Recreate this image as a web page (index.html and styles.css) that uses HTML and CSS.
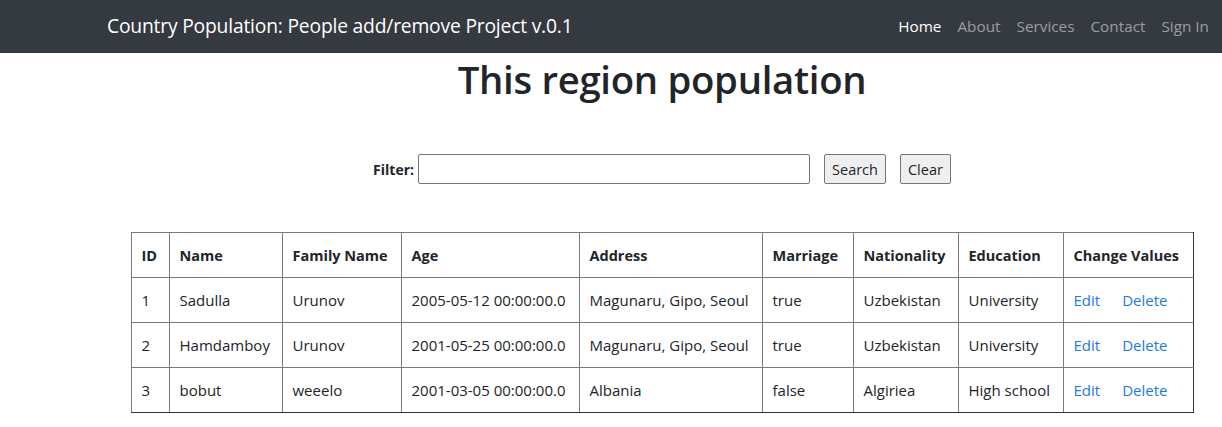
FILE: index.html
```html
<!DOCTYPE html>
<html>
<head>
<meta charset="utf-8">
<link rel="stylesheet" href="styles.css">
</head>
<body>
<nav class="navbar">
  <a class="brand" href="#">Country Population: People add/remove Project v.0.1</a>
  <ul class="nav">
    <li><a class="active" href="#">Home</a></li>
    <li><a href="#">About</a></li>
    <li><a href="#">Services</a></li>
    <li><a href="#">Contact</a></li>
    <li><a href="#">Sign In</a></li>
  </ul>
</nav>
<main class="main">
  <h1 class="title">This region population</h1>
  <form class="filter">
    <label class="filter-label">Filter:</label>
    <input class="filter-input" type="text">
    <button class="btn" type="button">Search</button>
    <button class="btn" type="button">Clear</button>
  </form>
  <table class="people">
    <colgroup>
      <col style="width:38px"><col style="width:113px"><col style="width:119px"><col style="width:178px"><col style="width:183px"><col style="width:91px"><col style="width:105px"><col style="width:105px"><col style="width:130px">
    </colgroup>
    <thead>
      <tr><th>ID</th><th>Name</th><th>Family Name</th><th>Age</th><th>Address</th><th>Marriage</th><th>Nationality</th><th>Education</th><th>Change Values</th></tr>
    </thead>
    <tbody>
      <tr><td>1</td><td>Sadulla</td><td>Urunov</td><td>2005-05-12 00:00:00.0</td><td>Magunaru, Gipo, Seoul</td><td>true</td><td>Uzbekistan</td><td>University</td><td><a class="act" href="#">Edit</a><a class="act" href="#">Delete</a></td></tr>
      <tr><td>2</td><td>Hamdamboy</td><td>Urunov</td><td>2001-05-25 00:00:00.0</td><td>Magunaru, Gipo, Seoul</td><td>true</td><td>Uzbekistan</td><td>University</td><td><a class="act" href="#">Edit</a><a class="act" href="#">Delete</a></td></tr>
      <tr><td>3</td><td>bobut</td><td>weeelo</td><td>2001-03-05 00:00:00.0</td><td>Albania</td><td>false</td><td>Algiriea</td><td>High school</td><td><a class="act" href="#">Edit</a><a class="act" href="#">Delete</a></td></tr>
    </tbody>
  </table>
</main>
</body>
</html>
```
FILE: styles.css
```css
* { box-sizing: border-box; }
html, body { margin: 0; padding: 0; }
body {
  font-family: "Open Sans", "Noto Sans", sans-serif;
  font-size: 15px;
  color: #212529;
  background: #fff;
}
.navbar {
  height: 53px;
  background: #343a40;
  display: flex;
  align-items: center;
  justify-content: space-between;
  padding: 0 13px 2px 107px;
}
.brand {
  color: #fff;
  text-decoration: none;
  font-size: 19.3px;
  letter-spacing: -0.2px;
}
.nav {
  list-style: none;
  margin: 0;
  padding: 0;
  display: flex;
  gap: 16px;
}
.nav a {
  color: rgba(255,255,255,0.5);
  text-decoration: none;
  font-size: 15.3px;
}
.nav a.active { color: #fff; }
.main {
  margin-left: 102px;
  display: flex;
  flex-direction: column;
  align-items: center;
}
.title {
  margin: 2px 0 0;
  font-size: 38.3px;
  font-weight: 600;
  line-height: 48px;
  letter-spacing: -0.3px;
}
.filter {
  margin-top: 48px;
  display: flex;
  align-items: center;
  height: 36px;
}
.filter-label {
  font-weight: 700;
  font-size: 14px;
  margin-right: 4px;
}
.filter-input {
  width: 392px;
  height: 30px;
  border: 1px solid #767676;
  border-radius: 2px;
  margin: 0 14px 0 0;
}
.btn {
  height: 30px;
  font-family: inherit;
  font-size: 14.5px;
  background: #efefef;
  border: 1px solid #767676;
  border-radius: 2px;
  padding: 0 7px;
  margin-right: 14px;
  color: #212529;
}
.btn:last-child { margin-right: 0; }
.people {
  margin-top: 45px;
  border-collapse: collapse;
  border: 1px solid #333;
  table-layout: fixed;
  width: 1062px;
}
.people th, .people td {
  border: 1px solid #7a7a7a;
  height: 45px;
  padding: 0 10px;
  text-align: left;
  font-size: 15px;
  white-space: nowrap;
}
.people th { font-weight: 700; font-size: 14.5px; }
.people thead tr { height: 44px; }
.people tr:last-child td { border-bottom-color: #333; }
.people tr td:last-child, .people tr th:last-child { border-right-color: #333; }
.act {
  color: #1f7ae0;
  text-decoration: none;
  margin-right: 22px;
}
.act:last-child { margin-right: 0; }
```
